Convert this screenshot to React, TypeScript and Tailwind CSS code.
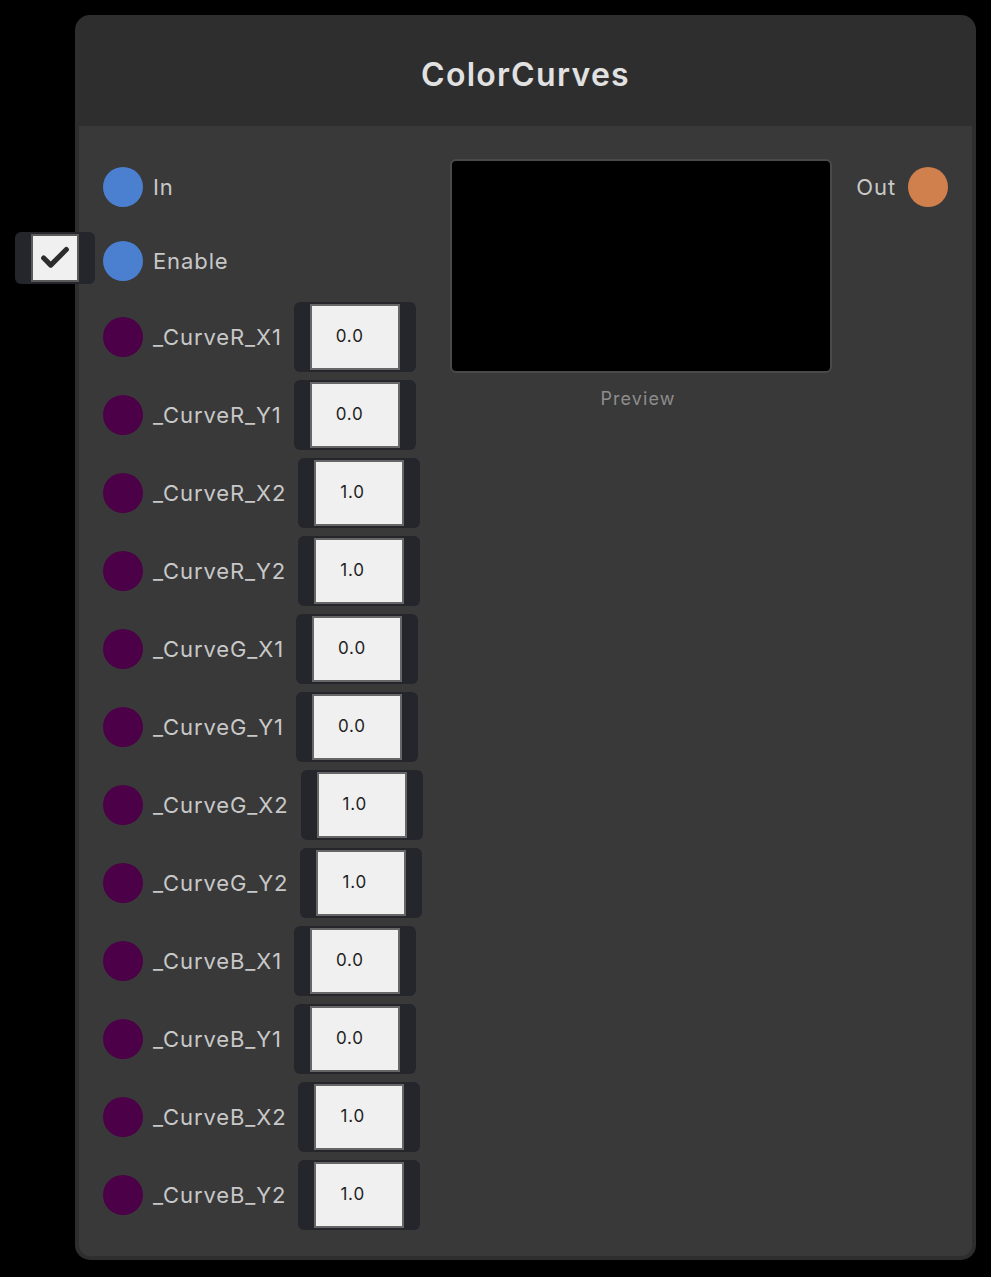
import { Check } from 'lucide-react';

const fields: { name: string; value: string }[] = [
  { name: '_CurveR_X1', value: '0.0' },
  { name: '_CurveR_Y1', value: '0.0' },
  { name: '_CurveR_X2', value: '1.0' },
  { name: '_CurveR_Y2', value: '1.0' },
  { name: '_CurveG_X1', value: '0.0' },
  { name: '_CurveG_Y1', value: '0.0' },
  { name: '_CurveG_X2', value: '1.0' },
  { name: '_CurveG_Y2', value: '1.0' },
  { name: '_CurveB_X1', value: '0.0' },
  { name: '_CurveB_Y1', value: '0.0' },
  { name: '_CurveB_X2', value: '1.0' },
  { name: '_CurveB_Y2', value: '1.0' },
];

function Port({ color }: { color: string }) {
  return <div className={`w-10 h-10 rounded-full shrink-0 ${color}`} />;
}

export default function App() {
  return (
    <div className="min-h-screen bg-black pl-[75px] pt-[15px] pb-4 font-['Inter','Liberation_Sans',sans-serif]">
      <div className="w-[901px] rounded-[15px] bg-[#2e2e2e] px-[4px] pb-[4px]">
        <div className="h-[111px] flex items-center justify-center pt-[9px]">
          <h1 className="text-[32px] font-semibold text-[#e1e1e1] tracking-[1.3px]">ColorCurves</h1>
        </div>

        <div className="bg-[#393939] rounded-b-[11px] flex pl-6 pr-6 pt-6 pb-[22px]">
          {/* inputs */}
          <div className="w-[347px] flex flex-col">
            <div className="h-[74px] flex items-center gap-[10px]">
              <Port color="bg-[#4b80d0]" />
              <span className="text-[22px] tracking-[0.9px] text-[#c8c8c8]">In</span>
            </div>
            <div className="relative h-[74px] flex items-center gap-[10px]">
              <div className="absolute right-full mr-[8px] top-[8px] w-[80px] h-[52px] rounded-[6px] bg-[#25262c] flex items-center justify-center">
                <div className="w-[48px] h-[48px] bg-[#f0f0f0] border-2 border-[#5a5a5a] flex items-center justify-center">
                  <Check className="w-[34px] h-[34px] text-[#2c2c2c]" strokeWidth={3.6} />
                </div>
              </div>
              <Port color="bg-[#4b80d0]" />
              <span className="text-[22px] tracking-[0.9px] text-[#c8c8c8]">Enable</span>
            </div>
            {fields.map((f) => (
              <div key={f.name} className="h-[78px] flex items-center">
                <Port color="bg-[#4b0048]" />
                <span className="ml-[10px] text-[22px] tracking-[0.9px] text-[#c8c8c8]">{f.name}</span>
                <div className="ml-[12px] h-[70px] rounded-[6px] bg-[#25262c] px-4 flex items-center">
                  <div className="w-[90px] h-[66px] bg-[#f0f0f0] border-2 border-[#666] flex items-center pl-6 text-[17px] tracking-[0.8px] text-[#1e1e1e]">
                    {f.value}
                  </div>
                </div>
              </div>
            ))}
          </div>

          {/* preview */}
          <div className="mt-[9px] flex flex-col items-center">
            <div className="w-[382px] h-[214px] bg-black border-2 border-[#4a4a4a] rounded-[6px]" />
            <span className="mt-[12px] text-[18px] tracking-[1.1px] text-[#8d8d8d] -translate-x-[3px]">Preview</span>
          </div>

          {/* outputs */}
          <div className="flex-1 flex flex-col items-end">
            <div className="h-[74px] flex items-center gap-3">
              <span className="text-[22px] tracking-[0.9px] text-[#c8c8c8]">Out</span>
              <Port color="bg-[#d0804c]" />
            </div>
          </div>
        </div>
      </div>
    </div>
  );
}
